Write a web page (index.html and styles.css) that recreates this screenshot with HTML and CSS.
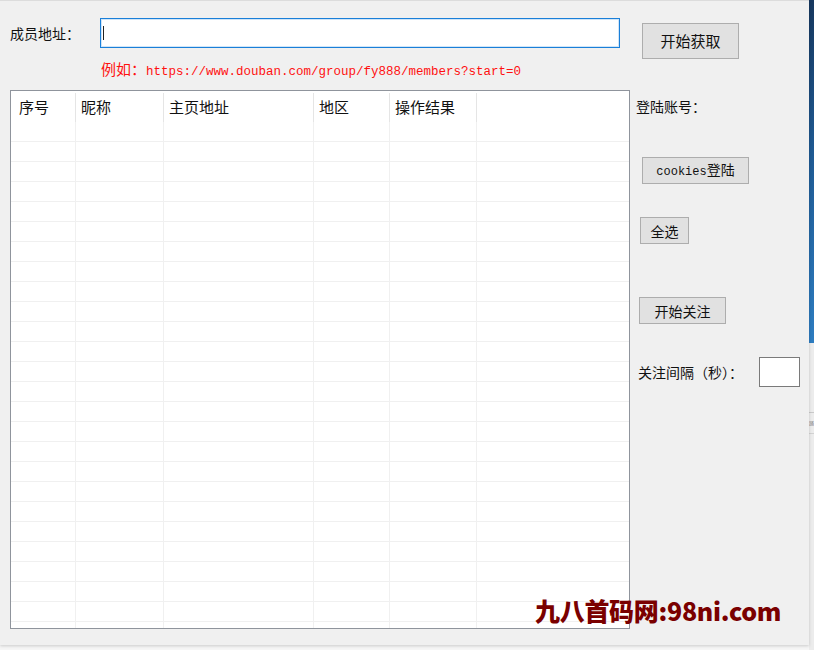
FILE: index.html
```html
<!DOCTYPE html>
<html lang="zh-CN">
<head>
<meta charset="utf-8">
<title>豆瓣小组成员关注</title>
<link rel="stylesheet" href="styles.css">
</head>
<body>
<div class="screen">
  <div class="window">
    <div class="left">
      <div class="url-row">
        <span class="label">成员地址：</span>
        <div class="url-input"><span class="caret"></span></div>
      </div>
      <div class="hint"><span class="hint-cjk">例如：</span><span class="hint-url">https://www.douban.com/group/fy888/members?start=0</span></div>
      <div class="table">
        <div class="thead">
          <div class="th th-first">序号</div>
          <div class="th">昵称</div>
          <div class="th">主页地址</div>
          <div class="th">地区</div>
          <div class="th">操作结果</div>
          <div class="th th-last"></div>
        </div>
        <div class="tbody" id="tbody"></div>
      </div>
    </div>
    <div class="right">
      <button class="btn btn-fetch">开始获取</button>
      <div class="login-label">登陆账号：</div>
      <button class="btn btn-cookies"><span class="mono">cookies</span>登陆</button>
      <button class="btn btn-all">全选</button>
      <button class="btn btn-follow">开始关注</button>
      <div class="interval-row">
        <span class="interval-label">关注间隔（秒）：</span>
        <div class="small-input"></div>
      </div>
    </div>
    <div class="watermark">九八首码网:98ni.com</div>
  </div>
  <div class="strip">
    <div class="strip-top"></div>
    <div class="strip-bottom">
      <div class="strip-line strip-line-a"></div>
      <div class="strip-glyph">踊</div>
      <div class="strip-line strip-line-b"></div>
    </div>
  </div>
</div>
<script src="app.js"></script>
</body>
</html>
```

FILE: app.js
```js
(function () {
  var body = document.getElementById('tbody');
  var html = '';
  for (var r = 0; r < 26; r++) {
    html += '<div class="tr">';
    for (var c = 0; c < 6; c++) {
      html += '<div class="td' + (c === 5 ? ' td-last' : '') + '"></div>';
    }
    html += '</div>';
  }
  body.innerHTML = html;
})();
```

FILE: styles.css
```css
html, body {
  margin: 0;
  padding: 0;
}

body {
  background: #f6f6f6;
  overflow: hidden;
  font-family: "Noto Sans CJK SC", "Microsoft YaHei", sans-serif;
  color: #111;
}

.screen {
  display: flex;
  width: 814px;
  height: 650px;
}

.window {
  position: relative;
  display: flex;
  width: 809px;
  height: 644px;
  background: #f0f0f0;
  border-top: 1px solid #dcdcdc;
  box-shadow: 0 1px 3px rgba(0, 0, 0, 0.18);
  flex-shrink: 0;
}

.left {
  display: flex;
  flex-direction: column;
  width: 620px;
  padding-left: 10px;
}

.url-row {
  display: flex;
  align-items: center;
  margin-top: 17px;
  height: 30px;
}

.label {
  width: 90px;
  font-size: 14px;
  line-height: 20px;
}

.url-input {
  box-sizing: border-box;
  width: 520px;
  height: 30px;
  background: #fff;
  border: 1px solid #1a7fd8;
  box-shadow: inset 0 0 0 1px rgba(120, 180, 235, 0.35);
  display: flex;
  align-items: center;
  padding-left: 2px;
}

.caret {
  display: block;
  width: 1px;
  height: 14px;
  background: #222;
}

.hint {
  margin-top: 11px;
  margin-left: 91px;
  height: 18px;
  line-height: 18px;
  color: #ff1010;
  white-space: nowrap;
}

.hint-cjk {
  font-size: 15px;
}

.hint-url {
  font-family: "Liberation Mono", "DejaVu Sans Mono", monospace;
  font-size: 12.5px;
}

.table {
  margin-top: 13px;
  box-sizing: border-box;
  width: 620px;
  height: 539px;
  background: #fff;
  border: 1px solid #8f949c;
  overflow: hidden;
}

.thead,
.tr {
  display: grid;
  grid-template-columns: 65px 88px 150px 76px 87px 1fr;
}

.thead {
  height: 31px;
}

.th {
  box-sizing: border-box;
  padding-left: 5px;
  font-size: 15px;
  border-right: 1px solid #e5e5e5;
  margin-top: 2px;
  line-height: 28px;
}

.th-first {
  padding-left: 8px;
}

.th-last {
  border-right: none;
}

.tr {
  height: 20px;
}

.td {
  box-sizing: border-box;
  border-right: 1px solid #f0f0f0;
  border-bottom: 1px solid #f0f0f0;
}

.td-last {
  border-right: none;
}

.right {
  display: flex;
  flex-direction: column;
  align-items: flex-start;
  flex: 1;
}

.btn {
  box-sizing: border-box;
  display: block;
  padding: 0;
  margin: 0;
  background: #e1e1e1;
  border: 1px solid #adadad;
  font-family: "Noto Sans CJK SC", "Microsoft YaHei", sans-serif;
  color: #111;
  font-size: 14px;
  line-height: 20px;
  text-align: center;
}

.btn-fetch {
  margin-left: 12px;
  margin-top: 22px;
  width: 97px;
  height: 36px;
  font-size: 15px;
}

.login-label {
  margin-left: 6px;
  margin-top: 37px;
  font-size: 14px;
  line-height: 20px;
}

.btn-cookies {
  margin-left: 12px;
  margin-top: 41px;
  width: 107px;
  height: 27px;
}

.mono {
  font-family: "Liberation Mono", "DejaVu Sans Mono", monospace;
  font-size: 12px;
}

.btn-all {
  margin-left: 10px;
  margin-top: 33px;
  width: 49px;
  height: 27px;
}

.btn-follow {
  margin-left: 9px;
  margin-top: 53px;
  width: 87px;
  height: 27px;
}

.interval-row {
  display: flex;
  align-items: center;
  margin-left: 8px;
  margin-top: 33px;
}

.interval-label {
  width: 121px;
  font-size: 14px;
  line-height: 20px;
  white-space: nowrap;
}

.small-input {
  box-sizing: border-box;
  width: 41px;
  height: 30px;
  background: #fff;
  border: 1px solid #7a7a7a;
}

.watermark {
  position: absolute;
  left: 535px;
  top: 593px;
  font-family: "Noto Sans CJK SC", sans-serif;
  font-weight: 800;
  font-size: 25px;
  line-height: 32px;
  letter-spacing: -0.3px;
  color: #7a0000;
  white-space: nowrap;
}

.strip {
  display: flex;
  flex-direction: column;
  width: 5px;
  height: 650px;
}

.strip-top {
  height: 343px;
  background: linear-gradient(180deg, #17385f 0%, #1f5a93 45%, #2d7cc0 100%);
}

.strip-bottom {
  flex: 1;
  background: #ececec;
}

.strip-line {
  height: 1px;
  background: #c9c9c9;
}

.strip-line-a {
  margin-top: 69px;
}

.strip-glyph {
  height: 20px;
  font-size: 5px;
  line-height: 20px;
  color: #888;
}

.strip-line-b {
  background: #d2d2d2;
}
```
